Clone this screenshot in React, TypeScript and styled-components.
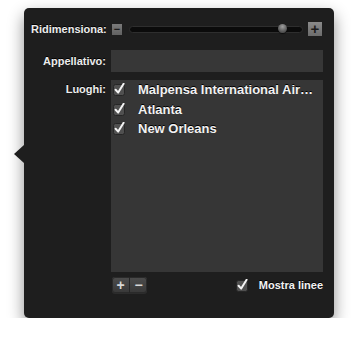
import styled, { createGlobalStyle } from "styled-components";

const GlobalStyle = createGlobalStyle`
    html, body {
        margin: 0;
        padding: 0;
        background: #ffffff;
    }
    body {
        font-family: "Liberation Sans", Arial, sans-serif;
    }
`;

// the first name is already cut short in the popover, as the list column is narrow
const places = ["Malpensa International Air…", "Atlanta", "New Orleans"];

const Check = () => (
    <svg width="13" height="13" viewBox="0 0 13 13">
        <rect x="0.5" y="1.5" width="11" height="11" rx="2" fill="#505050" stroke="#262626" />
        <path d="M2.6 6.8 L5.2 9.6 L10.6 0.8" fill="none" stroke="#f4f4f4" strokeWidth="2" strokeLinecap="round" strokeLinejoin="round" />
    </svg>
);

const App = () => {
    return (
        <>
            <GlobalStyle />
            <Page>
                <Panel>
                    <Row>
                        <Label>Ridimensiona:</Label>
                        <SliderControl>
                            <SmallButton>−</SmallButton>
                            <Track>
                                <Knob style={{ left: 148 }} />
                            </Track>
                            <BigButton>+</BigButton>
                        </SliderControl>
                    </Row>

                    <Row $mt={14}>
                        <Label $lh={22}>Appellativo:</Label>
                        <TextField />
                    </Row>

                    <Row $mt={8}>
                        <Label $lh={19.5}>Luoghi:</Label>
                        <PlaceList>
                            {places.map((p) => (
                                <PlaceItem key={p}>
                                    <Check />
                                    <PlaceName>{p}</PlaceName>
                                </PlaceItem>
                            ))}
                        </PlaceList>
                    </Row>

                    <Row $mt={5}>
                        <span />
                        <BottomBar>
                            <ButtonGroup>
                                <GroupButton>+</GroupButton>
                                <GroupButton $divider>−</GroupButton>
                            </ButtonGroup>
                            <CheckOption>
                                <Check />
                                <OptionText>Mostra linee</OptionText>
                            </CheckOption>
                        </BottomBar>
                    </Row>
                </Panel>
            </Page>
        </>
    );
};

const Page = styled.div`
    padding: 8px 0 0 24px;
`;

const Panel = styled.div`
    position: relative;
    width: 310px;
    height: 310px;
    box-sizing: border-box;
    padding: 14px 11px 0 7px;
    background: #1e1e1e;
    border-radius: 5px;
    box-shadow: 0 7px 16px rgba(0, 0, 0, 0.45);

    &::before {
        content: "";
        position: absolute;
        left: -10px;
        top: 137px;
        border-top: 9px solid transparent;
        border-bottom: 9px solid transparent;
        border-right: 10px solid #1e1e1e;
    }
`;

const Row = styled.div<{ $mt?: number }>`
    display: grid;
    grid-template-columns: 75px 212px;
    column-gap: 5px;
    margin-top: ${(p) => p.$mt ?? 0}px;
`;

const Label = styled.div<{ $lh?: number }>`
    text-align: right;
    font-size: 11px;
    font-weight: bold;
    color: #ececec;
    line-height: ${(p) => p.$lh ?? 14}px;
    white-space: nowrap;
    text-shadow: 0 -1px 0 #000;
`;

const SliderControl = styled.div`
    display: flex;
    align-items: center;
    height: 14px;
`;

const SmallButton = styled.div`
    width: 10px;
    height: 11px;
    margin-left: 1px;
    background: linear-gradient(#7a7a7a, #616161);
    color: #1c1c1c;
    font-size: 11px;
    font-weight: bold;
    line-height: 11px;
    text-align: center;
`;

const Track = styled.div`
    position: relative;
    width: 174px;
    height: 7px;
    margin-left: 7px;
    box-sizing: border-box;
    background: #0b0b0b;
    border: 1px solid #2e2e2e;
    border-radius: 4px;
`;

const Knob = styled.div`
    position: absolute;
    top: -2.5px;
    width: 9px;
    height: 9px;
    border-radius: 50%;
    background: radial-gradient(circle at 50% 30%, #a0a0a0, #5a5a5a 60%, #3a3a3a);
    box-shadow: 0 1px 1px rgba(0, 0, 0, 0.6);
`;

const BigButton = styled.div`
    width: 14px;
    height: 14px;
    margin-left: 5px;
    background: linear-gradient(#8a8a8a, #6c6c6c);
    color: #1c1c1c;
    font-size: 15px;
    font-weight: bold;
    line-height: 14px;
    text-align: center;
`;

const TextField = styled.div`
    height: 22px;
    background: #373737;
`;

const PlaceList = styled.div`
    height: 192px;
    background: #363636;
    padding-left: 2px;
    overflow: hidden;
`;

const PlaceItem = styled.div`
    display: flex;
    align-items: center;
    gap: 12px;
    height: 19.5px;
`;

const PlaceName = styled.span`
    font-size: 13px;
    font-weight: bold;
    color: #f2f2f2;
    white-space: nowrap;
    text-shadow: 0 -1px 0 #000;
`;

const BottomBar = styled.div`
    display: flex;
    align-items: center;
    justify-content: space-between;
    height: 16px;
`;

const ButtonGroup = styled.div`
    display: flex;
    margin-left: 1px;
    height: 16px;
    border-radius: 3px;
    overflow: hidden;
    background: linear-gradient(#4c4c4c, #383838);
    box-shadow: inset 0 0 0 1px #2a2a2a, 0 1px 0 #2c2c2c;
`;

const GroupButton = styled.div<{ $divider?: boolean }>`
    width: 17px;
    height: 16px;
    color: #d8d8d8;
    font-size: 14px;
    font-weight: bold;
    line-height: 16px;
    text-align: center;
    border-left: ${(p) => (p.$divider ? "1px solid #262626" : "none")};
`;

const CheckOption = styled.div`
    display: flex;
    align-items: center;
    gap: 10px;
`;

const OptionText = styled.span`
    font-size: 11px;
    font-weight: bold;
    color: #f2f2f2;
    text-shadow: 0 -1px 0 #000;
`;

export default App;
